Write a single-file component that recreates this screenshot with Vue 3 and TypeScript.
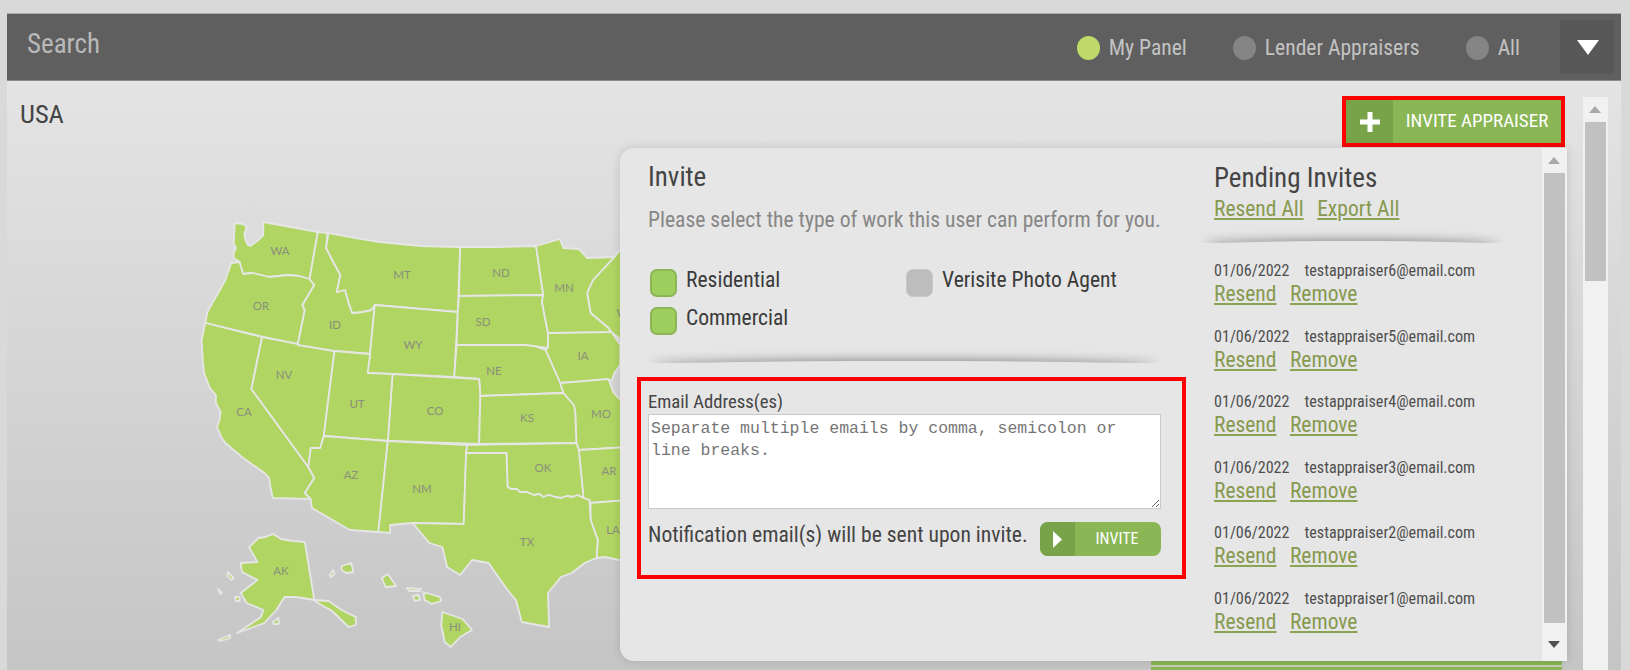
<script setup lang="ts">
const statuses = [
  { label: 'My Panel', on: true },
  { label: 'Lender Appraisers', on: false },
  { label: 'All', on: false },
]
const invites = [6, 5, 4, 3, 2, 1].map((n) => `testappraiser${n}@email.com`)
const workTypes = [
  { label: 'Residential', on: true },
  { label: 'Verisite Photo Agent', on: false },
  { label: 'Commercial', on: true },
]
const redRiver = '428,487 431,489 436,489 438,492 444,492 450,495 455,494 458,497 463,495 468,497 473,498 478,496 483,497 487,495 492,498'
const shapes: string[] = [
  '523,250 518,257 500,280 495,293 498,313 513,328 515,332 530,345 530,250',
  '462,333 515,331 519,338 523,345 523,365 518,373 516,380 472,383 466,366 460,350 462,345',
  '472,383 513,379 517,392 523,400 530,400 530,447 488,450 486,443 485,412 480,400 475,393',
  '488,450 530,447 530,500 498,503 497,500 492,498',
  '498,503 530,500 530,562 510,557 503,558 504,540 498,520',
  '198,223 205,224 208,227 206,234 207,240 209,245 211,246 217,241 222,235 222,222 245,227 268,232 261,279 252,276 243,275 235,276 227,277 220,275 213,273 205,274 203,268 202,262 197,258 197,253 199,248 197,243',
  '195,263 202,262 205,274 213,273 220,275 227,277 235,276 243,275 252,276 261,279 265,285 260,295 255,305 257,310 251,345 173,323 175,312 179,303 183,295 190,280',
  '173,323 221,337 212,389 260,467 265,478 257,493 262,499 230,498 228,487 227,478 223,473 205,458 190,443 187,438 183,427 185,420 186,412 182,403 182,395 177,388 172,373 171,360 170,340',
  '221,337 282,351 273,436 270,448 262,448 260,467 212,389',
  '268,232 276,233 275,248 281,262 287,275 284,292 291,290 294,303 297,313 305,312 313,310 316,305 312,354 282,351 251,345 257,310 255,305 260,295 265,285 261,279',
  '277,233 300,238 320,242 355,246 388,247 386,312 316,305 313,310 305,312 297,313 294,303 291,290 284,292 287,275 281,262 275,248',
  '316,305 386,312 383,377 310,373 312,354',
  '388,247 420,247 452,246 458,295 387,296',
  '387,296 458,295 457,302 462,333 462,348 442,345 385,345 386,312',
  '385,345 442,345 450,346 460,350 466,366 472,382 475,393 405,396 404,379 383,377',
  '331,374 404,379 405,396 404,444 327,441',
  '312,354 310,373 331,374 327,441 273,436 282,351',
  '405,396 475,393 480,400 484,405 485,412 486,443 404,444',
  '273,436 327,441 319,532 295,530 263,508 262,499 257,493 265,478 260,467 262,448 270,448',
  '327,441 394,445 393,453 391,524 348,523 329,525 329,533 319,532',
  `394,445 486,443 488,450 492,498 ${redRiver.split(' ').reverse().join(' ')} 427,453 393,453`,
  `393,453 427,453 ${redRiver} 497,500 498,520 504,540 503,558 493,563 482,573 473,577 462,593 463,627 440,622 435,600 428,590 422,580 412,563 398,560 388,575 377,567 373,547 362,543 348,523 391,524`,
  '452,246 472,239 475,248 488,249 495,258 518,257 500,280 495,293 498,313 513,328 515,332 462,333 457,302 458,295',
  '210,547 218,538 224,537 230,534 237,539 247,541 257,542 265,600 250,597 240,597 233,610 223,623 207,630 200,633 220,617 222,610 208,603 203,593 217,580 204,572 203,563 217,562',
  '265,600 277,601 288,610 300,617 300,625 294,627 280,611 268,603',
  '192,572 197,578 195,580 192,576',
  '184,589 187,593 186,594',
  '198,597 202,597 202,601 199,601',
  '184,640 194,635 194,638 186,641',
  '230,622 235,618 235,624 231,624',
  '322,578 327,574 334,586 325,587',
  '288,566 296,563 298,572 292,573 288,570',
  '278,575 281,570 282,574 279,577',
  '343,588 355,589 354,591 345,591',
  '348,596 353,595 354,600 350,601',
  '357,592 371,597 372,601 364,604 358,600',
  '373,612 390,619 398,630 388,637 380,647 375,642 372,625',
]
const labels: [string, number, number][] = [
  ['WA', 280, 251], ['OR', 261, 306], ['ID', 335, 325], ['MT', 402, 275], ['ND', 501, 273],
  ['MN', 564, 288], ['SD', 483, 322], ['WI', 624, 313], ['WY', 413, 345], ['IA', 583, 356],
  ['NV', 284, 375], ['NE', 494, 371], ['UT', 357, 404], ['CO', 435, 411], ['KS', 527, 418],
  ['MO', 601, 414], ['CA', 244, 412], ['AZ', 351, 475], ['NM', 422, 489], ['OK', 543, 468],
  ['AR', 609, 471], ['LA', 613, 530], ['TX', 527, 542], ['AK', 281, 571], ['HI', 455, 627],
]
</script>

<template>
  <div class="page">
    <header class="bar">
      <span class="search">Search</span>
      <div class="statuses">
        <div v-for="s in statuses" :key="s.label" class="status">
          <span class="dot" :class="{ on: s.on }"></span>
          <span>{{ s.label }}</span>
        </div>
      </div>
      <button class="toggle" type="button" aria-label="Expand">
        <svg width="22" height="15" viewBox="0 0 22 15"><path d="M0 0H22L11 15Z" fill="#fff" /></svg>
      </button>
    </header>

    <main class="main">
      <div class="top">
        <h2 class="usa">USA</h2>
        <button class="add" type="button">
          <span class="add-icon">
            <svg width="20" height="20" viewBox="0 0 20 20"><path d="M7.500 0h5v7.500h7.500v5h-7.500v7.500h-5v-7.500H0v-5h7.500Z" fill="#fff" /></svg>
          </span>
          <span class="add-text">INVITE APPRAISER</span>
        </button>
      </div>

      <svg class="map" width="620" height="470" viewBox="7 200 620 470">
        <g transform="scale(1.186 1)">
          <polygon v-for="(p, i) in shapes" :key="i" class="state" :points="p" />
        </g>
        <text v-for="l in labels" :key="l[0]" class="abbr" :x="l[1]" :y="l[2] + 4" text-anchor="middle">{{ l[0] }}</text>
      </svg>

      <section class="panel">
        <div class="left">
          <h3 class="title">Invite</h3>
          <p class="hint">Please select the type of work this user can perform for you.</p>
          <div class="checks">
            <label v-for="w in workTypes" :key="w.label" class="check">
              <span class="box" :class="{ on: w.on }"></span>
              <span>{{ w.label }}</span>
            </label>
          </div>
          <div class="rule"></div>
          <div class="form">
            <div class="form-label">Email Address(es)</div>
            <textarea class="emails" placeholder="Separate multiple emails by comma, semicolon or line breaks."></textarea>
            <div class="send">
              <span class="note">Notification email(s) will be sent upon invite.</span>
              <button class="invite" type="button">
                <span class="invite-icon">
                  <svg width="9" height="17" viewBox="0 0 9 17"><path d="M0 0L9 8.500L0 17Z" fill="#fff" /></svg>
                </span>
                <span class="invite-text">INVITE</span>
              </button>
            </div>
          </div>
        </div>
        <div class="right">
          <h3 class="title pending">Pending Invites</h3>
          <div class="links top-links">
            <a href="#">Resend All</a>
            <a href="#">Export All</a>
          </div>
          <div class="rule wide"></div>
          <div class="rows">
            <div v-for="mail in invites" :key="mail" class="row">
              <div class="meta"><span>01/06/2022</span><span>{{ mail }}</span></div>
              <div class="links">
                <a href="#">Resend</a>
                <a href="#">Remove</a>
              </div>
            </div>
          </div>
        </div>
        <div class="scroll inner">
          <span class="arrow up"></span>
          <span class="thumb"></span>
          <span class="arrow down"></span>
        </div>
      </section>

      <div class="scroll outer">
        <span class="arrow up"></span>
        <span class="thumb"></span>
      </div>

      <div class="foot"></div>
    </main>
  </div>
</template>

<style>
html, body { margin: 0; background: #d9d9d9; overflow: hidden; }
</style>

<style scoped>
.page {
  width: 1630px;
  height: 670px;
  padding: 13px 9px 0 7px;
  box-sizing: border-box;
  font-family: "Roboto Condensed", Roboto, "Liberation Sans", sans-serif;
  font-stretch: condensed;
  color: #444;
  overflow: hidden;
}
.bar {
  height: 68px;
  box-sizing: border-box;
  display: flex;
  align-items: center;
  background: #5f5f5f;
  border-top: 1px solid #a9a9a9;
  border-bottom: 1px solid #8b8b8b;
  padding: 0 7px 0 20px;
  color: #c3c3c3;
}
.search { font-size: 27px; color: #b9b9b9; flex: 1; margin-top: -7px; }
.statuses { display: flex; font-size: 21.600px; margin-top: 1px; }
.status { display: flex; align-items: center; gap: 9px; margin-right: 46px; }
.status:last-child { margin-right: 40px; }
.dot { width: 23px; height: 24px; border-radius: 50%; background: #858585; }
.dot.on { background: #bfd96b; }
.toggle {
  width: 54px;
  height: 54px;
  border: 0;
  padding: 0 0 0 2px;
  background: #585858;
  display: flex;
  align-items: center;
  justify-content: center;
}
.main {
  position: relative;
  height: 589px;
  overflow: hidden;
  background: linear-gradient(#e4e4e4, #c5c5c5);
}
.top {
  height: 67px;
  box-sizing: border-box;
  display: flex;
  align-items: flex-start;
  justify-content: space-between;
  padding: 15px 56px 0 13px;
}
.usa { margin: 3px 0 0; font-size: 26.500px; line-height: 30px; font-weight: 400; color: #444; }
.add {
  display: flex;
  height: 51px;
  width: 223px;
  box-sizing: border-box;
  padding: 0;
  border: 4px solid #f00;
  background: #8ab655;
  color: #fff;
  font: inherit;
}
.add-icon { width: 47px; height: 100%; background: #79a349; display: flex; align-items: center; justify-content: center; }
.add-text { flex: 1; font-size: 19px; font-weight: 400; line-height: 41px; text-align: center; white-space: nowrap; }
.map { display: block; margin-top: 52px; }
.state {
  fill: #b0d562;
  stroke: #e6e6e6;
  stroke-width: 1.800;
  stroke-linejoin: round;
  vector-effect: non-scaling-stroke;
}
.abbr { font-family: Lato, sans-serif; font-size: 11.500px; fill: #8b8f7d; }
.panel {
  position: absolute;
  left: 613px;
  top: 67px;
  width: 947px;
  height: 513px;
  display: flex;
  background: #e6e6e6;
  border-radius: 14px 0 0 14px;
  box-shadow: 0 0 10px rgba(0, 0, 0, 0.14);
  z-index: 2;
}
.left { width: 566px; padding-left: 28px; padding-top: 14px; box-sizing: content-box; }
.right { padding-top: 15px; }
.title { margin: 0; font-size: 27px; line-height: 30px; font-weight: 400; color: #444; }
.hint { margin: 16px 0 0; font-size: 21.600px; line-height: 24px; color: #868686; white-space: nowrap; }
.checks {
  margin: 37px 0 0 2px;
  display: grid;
  grid-template-columns: 256px 1fr;
  row-gap: 10px;
  font-size: 21.600px;
  color: #3a3a3a;
}
.check { display: flex; height: 28px; gap: 9px; align-items: flex-start; line-height: 22px; }
.box {
  width: 27px;
  height: 28px;
  box-sizing: border-box;
  border-radius: 7px;
  background: #bdbdbd;
  border: 1px solid #c8c8c8;
}
.box.on { background: #9ecf5e; border: 2px solid #8bb655; }
.rule {
  position: relative;
  overflow: hidden;
  width: 512px;
  height: 15px;
  margin-top: 13px;
}
.rule::after {
  content: "";
  position: absolute;
  left: 4px;
  right: 4px;
  top: 13px;
  height: 8px;
  border-radius: 50%;
  box-shadow: 0 0 11px rgba(0, 0, 0, 0.55);
}
.rule.wide { width: 303px; margin: 7px 0 0 -14px; }
.form {
  width: 549px;
  height: 202px;
  margin: 14px 0 0 -11px;
  padding: 11px 0 0 7px;
  box-sizing: border-box;
  border: 4px solid #f00;
}
.form-label { font-size: 18.700px; line-height: 20px; color: #444; }
.emails {
  display: block;
  width: 513px;
  height: 95px;
  margin-top: 2px;
  padding: 3px 2px;
  box-sizing: border-box;
  border: 1px solid #c9c9c9;
  background: #fff;
  font-family: "Liberation Mono", monospace;
  font-size: 16.500px;
  line-height: 22px;
  outline: none;
}
.emails::placeholder { color: #757575; opacity: 1; }
.send { width: 513px; margin-top: 13px; display: flex; justify-content: space-between; align-items: center; }
.note { font-size: 21.600px; color: #444; white-space: nowrap; margin-top: -9px; }
.invite {
  width: 121px;
  height: 34px;
  display: flex;
  padding: 0;
  border: 0;
  border-radius: 8px;
  overflow: hidden;
  background: #8ab655;
  color: #fff;
  font: inherit;
}
.invite-icon { width: 35px; height: 100%; background: #79a349; display: flex; align-items: center; justify-content: center; }
.invite-text { flex: 1; font-size: 16px; font-weight: 400; line-height: 34px; text-align: center; padding-right: 2px; }
.links { display: flex; gap: 13.500px; font-size: 21.500px; line-height: 24px; }
.links a { color: #87994f; text-decoration: underline; text-decoration-color: #8aa552; text-decoration-thickness: 2px; text-underline-offset: 2px; }
.top-links { margin-top: 4px; }
.rows { margin-top: 18px; }
.row { height: 65.500px; }
.meta { display: flex; gap: 15px; font-size: 16.100px; line-height: 20px; color: #4e4e4e; margin-bottom: 1px; }
.scroll { position: absolute; background: #f1f1f1; width: 25px; top: 0; }
.scroll.inner { right: 0; height: 100%; z-index: 3; }
.scroll.outer { left: 1576px; top: 16px; height: 573px; }
.thumb { position: absolute; left: 2px; width: 21px; background: #c1c1c1; }
.inner .thumb { top: 25px; height: 450px; }
.outer .thumb { top: 25px; height: 159px; }
.arrow { position: absolute; left: 6px; width: 0; height: 0; border-left: 6px solid transparent; border-right: 6px solid transparent; }
.arrow.up { top: 9px; border-bottom: 7px solid #a8a8a8; }
.arrow.down { bottom: 13px; border-top: 7px solid #505050; }
.foot {
  position: absolute;
  left: 1144px;
  width: 411px;
  top: 580px;
  height: 9px;
  background: linear-gradient(#8ab655 0 4px, #c4cfb0 4px 6px, #8ab655 6px);
}
</style>
